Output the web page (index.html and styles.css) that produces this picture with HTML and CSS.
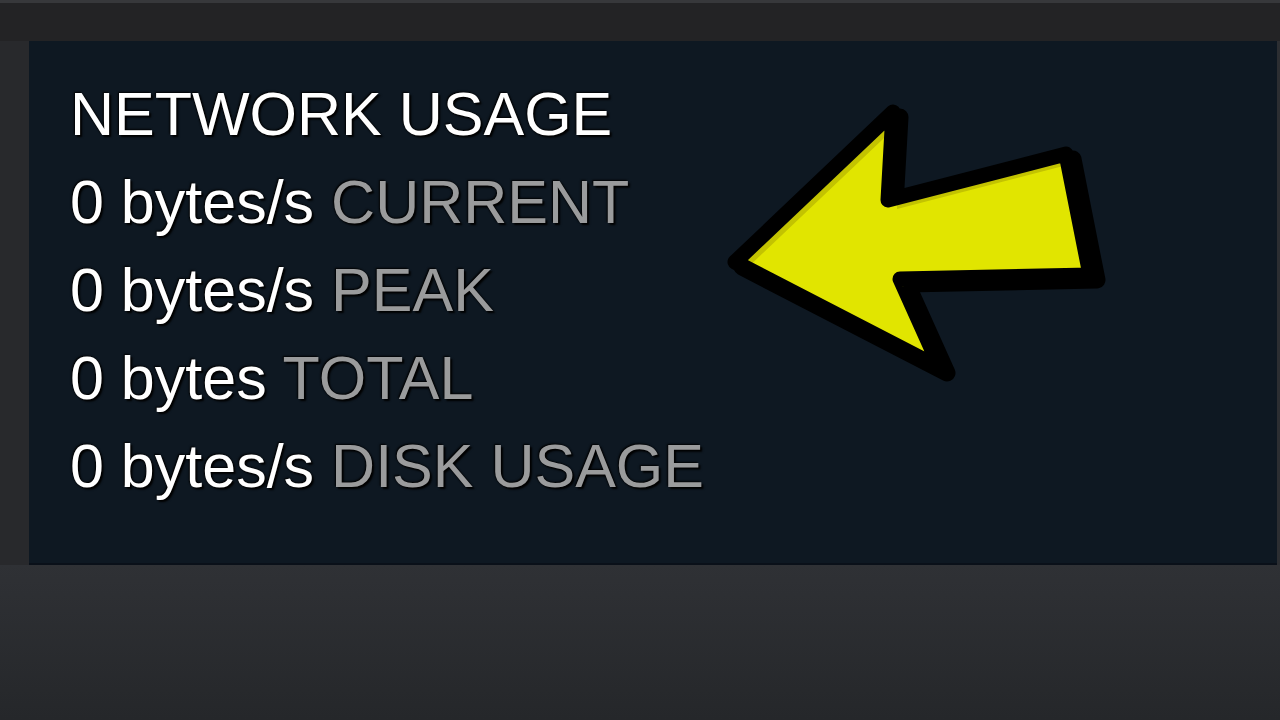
FILE: index.html
```html
<!DOCTYPE html>
<html lang="en">
<head>
    <meta charset="UTF-8">
    <meta name="viewport" content="width=device-width, initial-scale=1.0">
    <title>Network Usage</title>
    <link rel="stylesheet" href="styles.css">
</head>
<body>

    <div class="topbar"></div>

    <div class="main">
        <div class="side"></div>
        <div class="panel">
            <div class="stats">
                <div class="title">NETWORK USAGE</div>
                <div class="row">0 bytes/s <span class="label">CURRENT</span></div>
                <div class="row">0 bytes/s <span class="label">PEAK</span></div>
                <div class="row">0 bytes <span class="label">TOTAL</span></div>
                <div class="row">0 bytes/s <span class="label">DISK USAGE</span></div>
            </div>

            <!-- big yellow arrow pointing at the stats -->
            <svg class="arrow" width="430" height="310" viewBox="700 90 430 310">
                <defs>
                    <clipPath id="arrowClip">
                        <polygon points="735,262 893,112 888,200 1066,154 1090,275 900,279 940,368"/>
                    </clipPath>
                </defs>
                <polygon points="735,262 893,112 888,200 1066,154 1090,275 900,279 940,368"
                         transform="translate(7,5)" fill="#000" stroke="#000" stroke-width="17" stroke-linejoin="round"/>
                <polygon points="735,262 893,112 888,200 1066,154 1090,275 900,279 940,368"
                         fill="#c3c300"/>
                <g clip-path="url(#arrowClip)">
                    <polygon points="735,262 893,112 888,200 1066,154 1090,275 900,279 940,368"
                             transform="translate(9,9)" fill="#e1e500"/>
                </g>
                <polygon points="735,262 893,112 888,200 1066,154 1090,275 900,279 940,368"
                         fill="none" stroke="#000" stroke-width="15" stroke-linejoin="round"/>
            </svg>
        </div>
        <div class="edge"></div>
    </div>

    <div class="bottom"></div>

</body>
</html>
```

FILE: styles.css
```css
body {
    margin: 0;
    background-color: #26282b;
    font-family: 'Liberation Sans', Arial, sans-serif;
    height: 720px;
    overflow: hidden;
}

.topbar {
    height: 38px;
    background-color: #232325;
    border-top: 3px solid #37383b;
}

.main {
    display: flex;
    height: 524px;
}

.side {
    width: 29px;
    background-color: #28292c;
}

.edge {
    width: 3px;
    background-color: #2c2e32;
}

.panel {
    flex: 1;
    position: relative;
    background-color: #0e1822;
    border-bottom: 2px solid #0a1019;
    padding: 29px 0 0 41px;
}

.stats {
    color: #ffffff;
    font-size: 61px;
    line-height: 88px;
    letter-spacing: 0;
    text-shadow: 2px 2px 2px #000, -1px -1px 2px #000;
}

.label {
    color: #9a9b9c;
}

.arrow {
    position: absolute;
    left: 671px;
    top: 49px;
}

.bottom {
    height: 155px;
    background: linear-gradient(#2f3135, #25272a);
}
```
